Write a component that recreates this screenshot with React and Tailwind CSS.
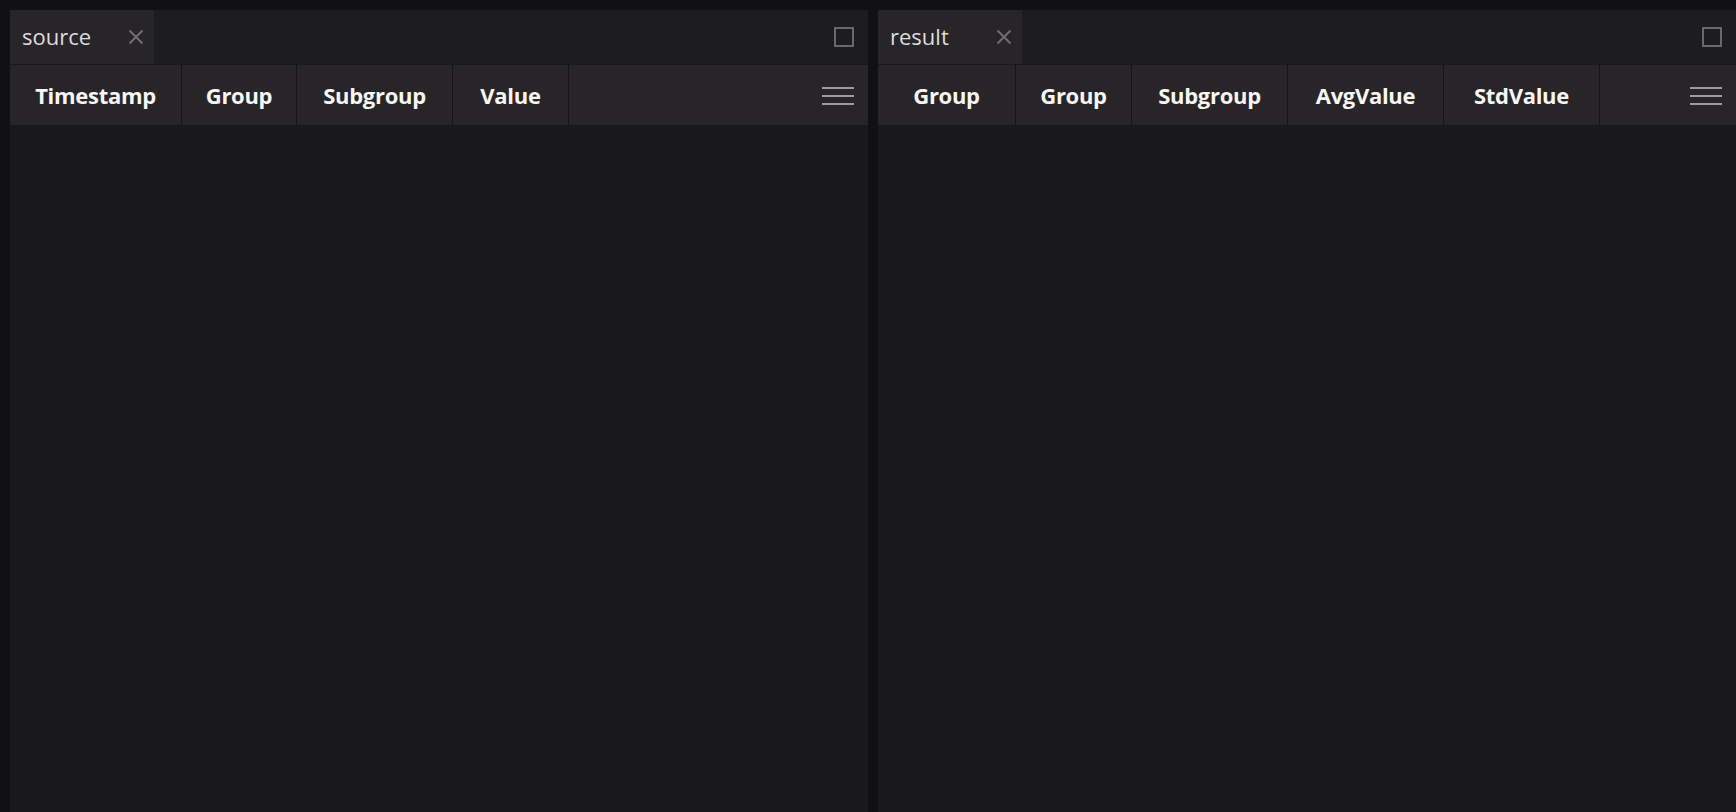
import React from "react";

const FONT = { fontFamily: '"Open Sans", "Noto Sans", "Liberation Sans", sans-serif' };

function CloseIcon() {
  return (
    <svg width="16" height="16" viewBox="0 0 16 16" className="shrink-0">
      <path d="M1.5 1.5 L14.5 14.5 M14.5 1.5 L1.5 14.5" stroke="#6f6d72" strokeWidth="2" fill="none" />
    </svg>
  );
}

function MaximizeIcon() {
  return <div className="w-[20px] h-[20px] border-2 border-[#6a686d]" />;
}

function MenuIcon() {
  return (
    <svg width="32" height="20" viewBox="0 0 32 20" className="shrink-0">
      <path d="M0 3 H32 M0 11 H32 M0 19 H32" stroke="#9c9a9f" strokeWidth="2" fill="none" />
    </svg>
  );
}

function Panel({ title, columns }) {
  return (
    <div className="flex-1 flex flex-col bg-[#19181b] min-w-0" style={FONT}>
      {/* tab strip */}
      <div className="h-[54px] flex items-stretch bg-[#1d1c1f]">
        <div className="w-[144px] bg-[#272528] flex items-center justify-between pl-[12px] pr-[10px]">
          <span className="text-[22px] text-[#dedcdf] leading-none -mt-[2px]">{title}</span>
          <CloseIcon />
        </div>
        <div className="flex-1" />
        <div className="flex items-center pr-[14px]">
          <MaximizeIcon />
        </div>
      </div>
      {/* column headers */}
      <div className="h-[60px] mt-[1px] flex bg-[#141316] gap-px">
        {columns.map((c, i) => (
          <div
            key={i}
            className="bg-[#272528] flex items-center justify-center text-[22px] font-bold text-[#f7f6f4] tracking-[-0.3px] shrink-0"
            style={{ width: c.w }}
          >
            {c.label}
          </div>
        ))}
        <div className="flex-1 bg-[#272528] flex items-center justify-end pr-[14px]">
          <MenuIcon />
        </div>
      </div>
      <div className="flex-1" />
    </div>
  );
}

export default function App() {
  return (
    <div className="w-full h-screen bg-[#111013] flex gap-[10px] pt-[10px] pl-[10px] overflow-hidden">
      <Panel
        title="source"
        columns={[
          { label: "Timestamp", w: 171 },
          { label: "Group", w: 114 },
          { label: "Subgroup", w: 155 },
          { label: "Value", w: 115 },
        ]}
      />
      <Panel
        title="result"
        columns={[
          { label: "Group", w: 137 },
          { label: "Group", w: 115 },
          { label: "Subgroup", w: 155 },
          { label: "AvgValue", w: 155 },
          { label: "StdValue", w: 155 },
        ]}
      />
    </div>
  );
}
